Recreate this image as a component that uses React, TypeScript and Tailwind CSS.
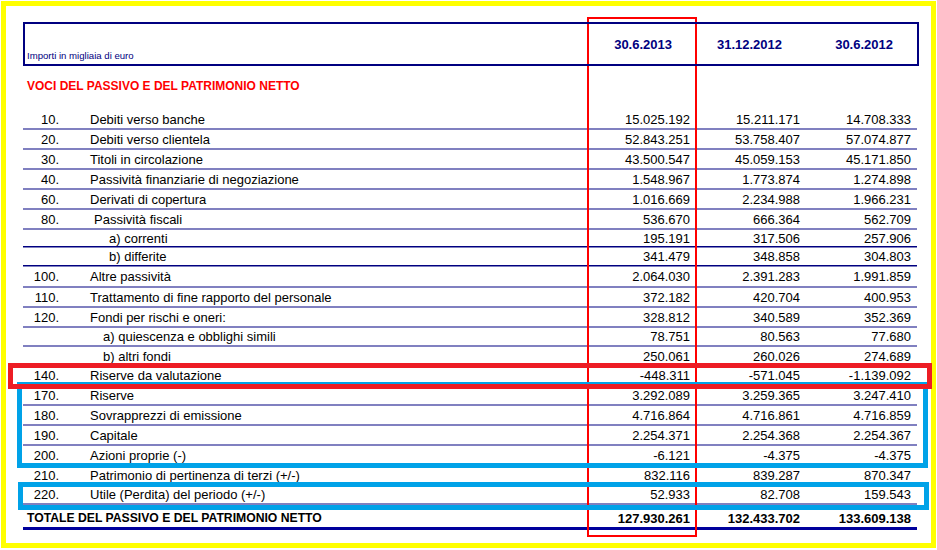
type Row = {
  n?: string;
  label: string;
  pad?: string;
  h?: string;
  dark?: boolean;
  v: [string, string, string];
};

const rows: Row[] = [
  { n: "10.", label: "Debiti verso banche", v: ["15.025.192", "15.211.171", "14.708.333"] },
  { n: "20.", label: "Debiti verso clientela", v: ["52.843.251", "53.758.407", "57.074.877"] },
  { n: "30.", label: "Titoli in circolazione", v: ["43.500.547", "45.059.153", "45.171.850"] },
  { n: "40.", label: "Passività finanziarie di negoziazione", v: ["1.548.967", "1.773.874", "1.274.898"] },
  { n: "60.", label: "Derivati di copertura", v: ["1.016.669", "2.234.988", "1.966.231"] },
  { n: "80.", label: "Passività fiscali", pad: "pl-[35px]", v: ["536.670", "666.364", "562.709"] },
  { label: "a) correnti", pad: "pl-[50px]", h: "h-[18px]", dark: true, v: ["195.191", "317.506", "257.906"] },
  { label: "b) differite", pad: "pl-[50px]", h: "h-[19px]", dark: true, v: ["341.479", "348.858", "304.803"] },
  { n: "100.", label: "Altre passività", h: "h-[21px]", v: ["2.064.030", "2.391.283", "1.991.859"] },
  { n: "110.", label: "Trattamento di fine rapporto del personale", v: ["372.182", "420.704", "400.953"] },
  { n: "120.", label: "Fondi per rischi e oneri:", v: ["328.812", "340.589", "352.369"] },
  { label: "a) quiescenza e obblighi simili", pad: "pl-[44px]", h: "h-[19px]", v: ["78.751", "80.563", "77.680"] },
  { label: "b) altri fondi", pad: "pl-[44px]", v: ["250.061", "260.026", "274.689"] },
  { n: "140.", label: "Riserve da valutazione", h: "h-[19px]", v: ["-448.311", "-571.045", "-1.139.092"] },
  { n: "170.", label: "Riserve", v: ["3.292.089", "3.259.365", "3.247.410"] },
  { n: "180.", label: "Sovrapprezzi di emissione", v: ["4.716.864", "4.716.861", "4.716.859"] },
  { n: "190.", label: "Capitale", v: ["2.254.371", "2.254.368", "2.254.367"] },
  { n: "200.", label: "Azioni proprie (-)", v: ["-6.121", "-4.375", "-4.375"] },
  { n: "210.", label: "Patrimonio di pertinenza di terzi (+/-)", v: ["832.116", "839.287", "870.347"] },
  { n: "220.", label: "Utile (Perdita) del periodo (+/-)", h: "h-[19px]", v: ["52.933", "82.708", "159.543"] },
];

const cols = "grid grid-cols-[36px_521px_110px_110px_111px] items-center";

function TableRow({ row }: { row: Row }) {
  return (
    <div className={`flex flex-col ${row.h ?? "h-[20px]"}`}>
      <div className={`${cols} flex-1 text-[13px] leading-[15px] text-black`}>
        <span className="text-right">{row.n}</span>
        <span className={row.pad ?? "pl-[31px]"}>{row.label}</span>
        {row.v.map((x, i) => (
          <span key={i} className="text-right">
            {x}
          </span>
        ))}
      </div>
      {row.dark ? (
        <>
          <div className="h-px bg-[#000080]" />
          <div className="h-px bg-[#8080c0]" />
        </>
      ) : (
        <div className="h-[2px] bg-[#8080c0]" />
      )}
    </div>
  );
}

export default function App() {
  return (
    <div className="relative h-[550px] w-[937px] bg-white font-['Liberation_Sans',Arial,sans-serif]">
      <div className="ml-px mt-px h-[547px] w-[935px] border-[5px] border-[#ffff00] pl-[17px] pt-[16px]">
        <div className="relative z-20 grid h-[44px] w-[896px] grid-cols-[555px_110px_110px_111px] border-2 border-[#000080] text-[#000080]">
          <span className="self-end pb-[2px] pl-[2px] text-[9.6px] leading-[12px]">
            Importi in migliaia di euro
          </span>
          {["30.6.2013", "31.12.2012", "30.6.2012"].map((d) => (
            <span key={d} className="self-center pr-[18px] text-right text-[13px] font-bold leading-[15px]">
              {d}
            </span>
          ))}
        </div>

        <div className="h-[44px] pl-[4px] pt-[13px] text-[12px] font-bold leading-[14px] text-[#ff0000]">
          VOCI DEL PASSIVO E DEL PATRIMONIO NETTO
        </div>

        <div className="w-[894px]">
          {rows.map((r) => (
            <TableRow key={r.label} row={r} />
          ))}
          <div className="flex h-[25px] flex-col">
            <div className={`${cols} flex-1 pt-[4px] font-bold text-black`}>
              <span className="col-span-2 pl-[4px] text-[12.2px] leading-[14px]">
                TOTALE DEL PASSIVO E DEL PATRIMONIO NETTO
              </span>
              {["127.930.261", "132.433.702", "133.609.138"].map((x) => (
                <span key={x} className="text-right text-[13px] leading-[15px]">
                  {x}
                </span>
              ))}
            </div>
            <div className="h-[3px] bg-[#00009c]" />
          </div>
        </div>
      </div>

      {/* highlight boxes drawn over the table */}
      <div className="pointer-events-none absolute left-[587px] top-[16px] z-10 h-[520px] w-[110px] border-2 border-[#ff0000]" />
      <div className="pointer-events-none absolute left-[17px] top-[381px] z-30 h-[86px] w-[911px] border-[5px] border-[#00a2e8]" />
      <div className="pointer-events-none absolute left-[18px] top-[481px] z-30 h-[28px] w-[911px] border-[5px] border-[#00a2e8]" />
      <div className="pointer-events-none absolute left-[8px] top-[362px] z-40 h-[26px] w-[924px] border-[5px] border-[#ed1c24]" />
    </div>
  );
}
